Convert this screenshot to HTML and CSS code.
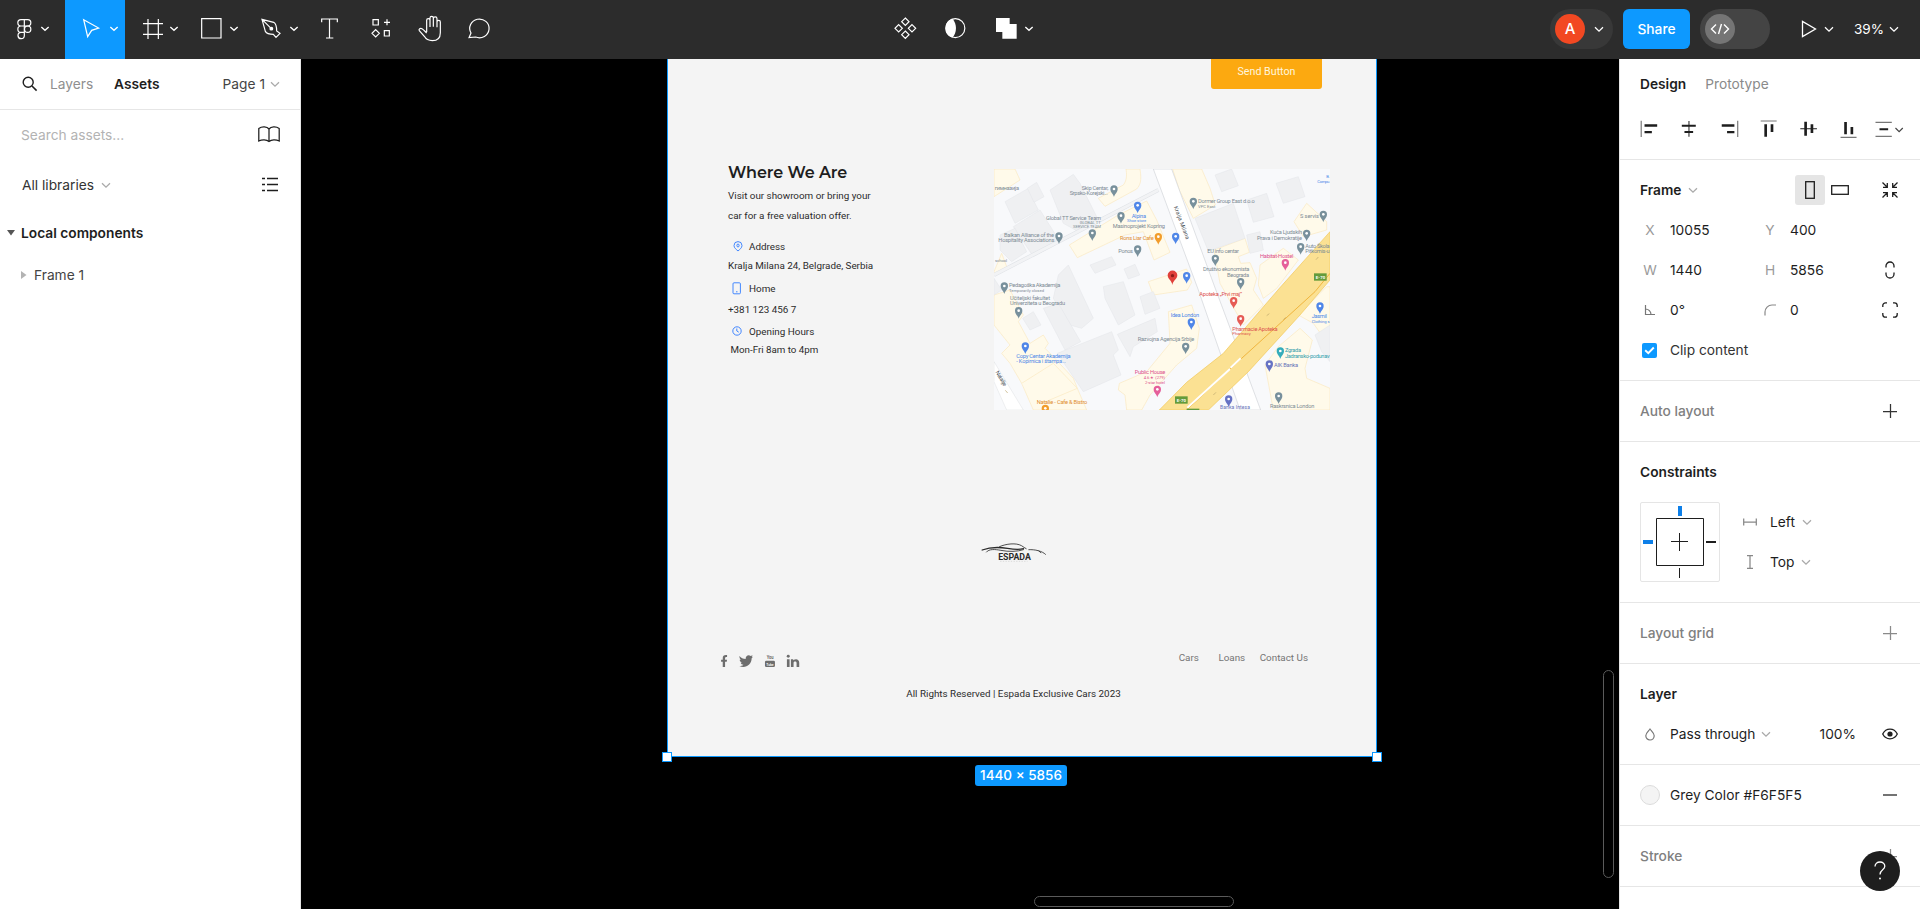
FILE: index.html
```html
<!DOCTYPE html>
<html lang="en">
<head>
<meta charset="utf-8">
<title>Espada – Editor</title>
<link rel="stylesheet" href="styles.css">
</head>
<body>
<svg class="defs" width="0" height="0" aria-hidden="true">
  <symbol id="chev" viewBox="0 0 10 7"><path d="M1 1.2 5 5.2 9 1.2" fill="none" stroke="currentColor" stroke-width="1.25"/></symbol>
  <symbol id="plus" viewBox="0 0 14 14"><path d="M0 7.5H14M7.5 0V14" fill="none" stroke="currentColor" stroke-width="1.25"/></symbol>
</svg>
<div class="app">
  <header class="toolbar">
    <div class="tools">
      <svg class="t65" viewBox="0 0 195 177"><g class="ln"><path d="M73 59h-10a9.500 9.500 0 0 0 0 19h10zM73 59h10a9.500 9.500 0 0 1 0 19h-10M73 78h-10a9.500 9.500 0 0 0 0 19h10zM73 97h-10a9.500 9.500 0 1 0 10 9.500z"/><circle cx="83" cy="87.500" r="9.500"/><path class="ch" d="M124 81l11 10 11-10"/></g></svg>
      <svg class="t60 active" viewBox="195 0 180 177"><g class="ln"><path d="M251 59L296 84 275 91 263 110z"/><path class="ch" d="M331 81l11 10 11-10"/></g></svg>
      <svg class="t60" viewBox="375 0 180 177"><g class="ln"><path d="M429 71h60M429 103h60M444 57v60M475 57v60"/><path class="ch" d="M511 81l11 10 11-10"/></g></svg>
      <svg class="t60" viewBox="555 0 180 177"><g class="ln"><path d="M605 56h58v58h-58z"/><path class="ch" d="M691 81l11 10 11-10"/></g></svg>
      <svg class="t60" viewBox="735 0 180 177"><g class="ln"><path d="M786 58l35 9c7 4 9 15 9 26l10 7-12 12-8-9c-10 0-20-2-24-9zM786 58l25 25"/><circle class="solid" cx="814" cy="86" r="4"/><path class="ch" d="M871 81l11 10 11-10"/></g></svg>
      <svg class="t50" viewBox="915 0 150 177"><path class="ln" d="M965 67V57h47v10M988.500 57v57M978 114h22"/></svg>
      <svg class="t50" viewBox="1065 0 150 177"><path class="ln" d="M1119 59h16v16h-16zM1152 67h18M1161 58v18M1127 89l11 11-11 11-11-11zM1153 92h15v16h-15z"/></svg>
      <svg class="t50" viewBox="1215 0 150 177"><path class="ln" d="M1280 96V61a5 5 0 0 1 10 0V54a5 5 0 0 1 10 0V56a5 5 0 0 1 11 0V66a5 5 0 0 1 10 0V98c0 15-9 24-24 24-11 0-19-4-24-13L1258 92c-3-5 3-9 8-6 5 3 9 8 14 13M1290 60V81M1300 55V80M1311 64V82"/></svg>
      <svg class="t50" viewBox="1365 0 150 177"><path class="ln" d="M1407 113l6-14a29 28 0 1 1 14 12z"/></svg>
    </div>
    <div class="tools mid">
      <svg class="t50" viewBox="60 0 150 177"><path class="ln" d="M136 54l11 11-11 11-11-11zM136 93l11 11-11 11-11-11zM116 74l11 11-11 11-11-11zM156 74l11 11-11 11-11-11z"/></svg>
      <svg class="t50" viewBox="210 0 150 177"><circle class="ln" cx="286" cy="84.500" r="28.500"/><path fill="#fff" d="M277 56a30 30 0 0 0 0 57c14-14 15-42 0-57z"/></svg>
      <svg class="t65" viewBox="360 0 195 177"><path fill="#fff" d="M408 54h41v18h21v44h-43V96h-19z"/><path class="ln ch" d="M496 81l11 10 11-10"/></svg>
    </div>
    <div class="right-tools">
      <div class="user"><span class="avatar">A</span><svg class="chev"><use href="#chev"/></svg></div>
      <button class="share">Share</button>
      <div class="toggle"><span><svg width="20" height="12" viewBox="0 0 20 12"><path d="M6 1.500 1.500 6 6 10.500M14 1.500 18.500 6 14 10.500M11.500 1 8.500 11" fill="none" stroke="#fff" stroke-width="1.400"/></svg></span></div>
      <svg class="play" viewBox="0 0 16 18"><path d="M1.500 1.500V16.500L14.500 9z" fill="none" stroke="#fff" stroke-width="1.300"/></svg><svg class="chev"><use href="#chev"/></svg>
      <span class="pct">39%</span><svg class="chev"><use href="#chev"/></svg>
    </div>
  </header>

  <div class="body">
    <aside class="left">
      <div class="tabs">
        <svg width="16" height="16" viewBox="0 0 16 16"><circle cx="6.200" cy="6.200" r="5" fill="none" stroke="#1e1e1e" stroke-width="1.400"/><path d="M10 10l4.600 4.600" stroke="#1e1e1e" stroke-width="1.600"/></svg>
        <span class="tab-l">Layers</span><b class="tab-a">Assets</b>
        <span class="page">Page 1</span><svg class="chev grey"><use href="#chev"/></svg>
      </div>
      <div class="row search"><span>Search assets...</span>
        <svg width="22" height="17" viewBox="0 0 22 17"><path d="M11 3C9 .5 4 .2 .8 2.500V15C4 13.300 8.500 13.300 11 15.500 13.500 13.300 18 13.300 21.200 15V2.500C18 .2 13 .5 11 3zV15.500" fill="none" stroke="#1e1e1e" stroke-width="1.250"/></svg>
      </div>
      <div class="row libs"><span>All libraries</span><svg class="chev grey"><use href="#chev"/></svg>
        <svg class="end" width="16" height="16" viewBox="0 0 16 16"><path d="M0 1.500h3M5 1.500h11M0 7.500h3M5 7.500h11M0 13.500h3M5 13.500h11" stroke="#1e1e1e" stroke-width="1.300"/></svg>
      </div>
      <div class="row local"><svg width="8" height="6" viewBox="0 0 8 6"><path d="M0 0h8L4 5.500z" fill="#555"/></svg><b>Local components</b></div>
      <div class="row frame1"><svg width="6" height="8" viewBox="0 0 6 8"><path d="M0 0v8L5.500 4z" fill="#b3b3b3"/></svg><span>Frame 1</span></div>
    </aside>

    <main class="canvas">
      <section class="artboard">
        <div class="send">Send Button</div>
        <div class="where">
          <div class="info">
            <h2>Where We Are</h2>
            <p class="intro">Visit our showroom or bring your<br>car for a free valuation offer.</p>
            <div class="item head"><svg width="10" height="11" viewBox="0 0 10 11"><path d="M5 10C3.500 8.600 1 7 1 4.600a4 4 0 0 1 8 0C9 7 6.500 8.600 5 10z"/><ellipse cx="5" cy="4.500" rx="1.100" ry="1.500"/></svg>Address</div>
            <div class="item">Kralja Milana 24, Belgrade, Serbia</div>
            <div class="item head home"><svg width="10" height="13" viewBox="0 0 10 13"><rect x="1" y=".8" width="7.400" height="11" rx="1"/><path d="M4 9.800h1.500"/></svg>Home</div>
            <div class="item">+381 123 456 7</div>
            <div class="item head open"><svg width="10" height="10" viewBox="0 0 10 10"><circle cx="5" cy="5" r="4.200"/><path d="M4.800 2.500V5l2 1.200"/></svg>Opening Hours</div>
            <div class="item hours">Mon-Fri 8am to 4pm</div>
          </div>
          <svg class="map" viewBox="12 12 1008 723">
            <defs>
              <g id="pin"><path d="M0 18C-2 9-11 5-11-6A11 11 0 0 1 11-6C11 5 2 9 0 18z"/><circle cx="0" cy="-6" r="4" fill="#fff"/></g>
            </defs>
            <rect x="12" y="12" width="1008" height="723" fill="#f8f9fb"/>
            <g class="yel">
              <path d="M12 12H75L90 45 12 95z"/><path d="M325 100L400 60C412 45 410 25 408 12H450C456 50 450 60 440 72L345 124z"/>
              <path d="M238 240L385 150 470 108 500 165 540 262 492 285 460 200 405 210 262 278z"/>
              <path d="M548 12H635L660 70 676 120 610 160 568 75z"/><path d="M950 115L1010 170V195L940 215 912 170z"/>
              <path d="M672 255L765 220 778 262 745 275 752 295 780 293 800 340 790 375 820 420 760 480 690 355z"/>
              <path d="M475 350L590 312 605 352 592 375 490 390z"/>
              <path d="M810 300L880 250 925 285 860 370 820 400 805 360z"/>
              <path d="M12 390L60 375 100 450 85 470 120 535 160 510 175 535 165 550 190 575 250 640 262 670 290 735H130L95 655 60 595 35 565 60 540 12 480z"/>
              <path d="M95 655L190 595 262 670 155 715"/>
              <path d="M535 440L605 420 628 490 620 550 560 600 480 690 455 735H410L405 690 385 675 388 655 470 620 540 535z"/>
              <path d="M865 545L930 490 967 525 945 610 950 640 1020 670V735H850L825 600z"/><path d="M925 450L1010 365H1020V480L995 510 970 475z"/><path d="M12 320L35 265 50 305 12 330z"/>
            </g>
            <g class="bld">
              <path d="M45 110L115 70 130 105 145 135 75 175z"/><path d="M112 70L140 52 162 95 132 112z"/><path d="M180 75L250 28 270 55 325 165 265 200 220 175z"/>
              <path d="M70 185L150 135 210 230 130 275z"/><path d="M30 210L75 190 110 260 65 290 30 255z"/><path d="M615 160L730 115 765 220 655 258z"/>
              <path d="M675 30L725 12 745 62 695 80z"/><path d="M770 105L830 85 852 155 790 172z"/><path d="M858 55L925 35 945 95 880 115z"/>
              <path d="M300 300L365 275 378 300 315 325z"/><path d="M402 312L435 298 449 330 415 342z"/><path d="M205 330L235 300 310 460 275 490 240 480 190 400z"/><path d="M12 340L35 375 12 390z"/>
              <path d="M450 395L490 380 510 430 465 448z"/><path d="M340 365L400 350 435 450 385 480 345 400z"/>
              <path d="M160 430L205 415 272 530 225 555z"/><path d="M98 460L130 440 153 480 120 495z"/><path d="M202 565L365 500 385 555 370 570 393 630 280 680z"/><path d="M382 508L495 460 502 500 430 545 420 575z"/>
              <path d="M975 510L1020 480V590L995 560z"/><path d="M770 210L810 200 820 255 780 265z"/>
            </g>
            <path d="M12 330L505 75" stroke="#dfe2e6" stroke-width="12"/><path d="M12 330L505 75" stroke="#f2f3f5" stroke-width="9"/>
            <path d="M490 12L625 375 750 735H812L672 360 545 12z" fill="#fff" stroke="#d0d3d8" stroke-width="2"/>
            <path d="M12 590L100 735H50L12 650z" fill="#fff" stroke="#d0d3d8"/>
            <path d="M1020 200L868 370 700 565 590 652 508 735H655L775 620 930 450 1020 345z" fill="#fbe193" stroke="#f2c758" stroke-width="2"/>
            <path d="M1020 325L975 380 755 580 590 735" fill="none" stroke="#f0b53e" stroke-width="3"/>
            <path d="M752 580L722 608M720 612L592 728" stroke="#fff" stroke-width="6"/>
            <rect x="972" y="325" width="38" height="22" fill="#649b3b"/><rect x="555" y="694" width="38" height="22" fill="#649b3b"/><rect x="590" y="731" width="38" height="4" fill="#649b3b"/>
            <g class="white"><text x="977" y="341" textLength="29">E-70</text><text x="560" y="710" textLength="28">E-70</text></g>
            <g class="lbl">
              <text x="14" y="74" textLength="73">гимназија</text><text x="275" y="74" textLength="80">Skip Centar,</text><text x="239" y="91" textLength="115">Srpsko-Korejski...</text>
              <text x="168" y="164" textLength="165">Global TT Service Team</text><text class="sm" x="269" y="177" textLength="63">GLOBAL TT</text><text class="sm" x="249" y="189" textLength="84">SERVICE TEAM</text>
              <text x="42" y="215" textLength="150">Balkan Alliance of the</text><text x="25" y="232" textLength="168">Hospitality Associations</text><text x="368" y="190" textLength="157">Masinoprojekt Kopring</text>
              <text x="385" y="263" textLength="44">Ponos</text><text x="624" y="114" textLength="170">Dormer Group East d.o.o</text><text class="sm" x="624" y="128" textLength="52">VPC East</text>
              <text x="930" y="159" textLength="57">S servis</text><text x="840" y="208" textLength="96">Kuća Ljudskih</text><text x="801" y="224" textLength="135">Prava i Demokratije</text>
              <text x="946" y="248" textLength="73">Auto Škola</text><text x="946" y="264" textLength="73">Pitkomis-u</text><text x="652" y="265" textLength="95">EU info centar</text>
              <text x="639" y="319" textLength="139">Društvo ekonomista</text><text x="711" y="335" textLength="66">Beograda</text><text class="sm" x="15" y="290" textLength="36">school</text>
              <text x="57" y="367" textLength="154">Pedagoška Akademija</text><text class="sm" x="57" y="382" textLength="105">Temporarily closed</text><text x="60" y="404" textLength="120">Učiteljski fakultet</text><text x="60" y="421" textLength="165">Univerziteta u Beogradu</text>
              <text x="443" y="528" textLength="170">Razvojna Agencija Srbije</text><text x="840" y="730" textLength="133">Raskrsnica London</text>
            </g>
            <g class="lbl blue"><text x="425" y="158" textLength="43">Alpina</text><text class="sm" x="411" y="171" textLength="58">Shoe store</text><text x="542" y="455" textLength="85">Idea London</text><text x="79" y="579" textLength="163">Copy Centar Akademija</text><text x="79" y="595" textLength="149">- Kopirnica i štampa...</text><text x="965" y="460" textLength="46">Jasmil</text><text class="sm" x="965" y="475" textLength="54">Clothing s</text><text class="sm" x="982" y="53" textLength="38">Compu.</text><text class="sm" x="1009" y="40">B.</text></g>
            <g class="lbl org"><text x="390" y="226" textLength="101">Rons Liar Cafe</text><text x="140" y="717" textLength="152">Natalie - Cafe &amp; Bistro</text></g>
            <g class="lbl pink"><text x="810" y="278" textLength="100">Habitat-Hostel</text><text x="434" y="626" textLength="92">Public House</text><text class="sm" x="461" y="642" textLength="64">4.6 ★ (279)</text><text class="sm" x="465" y="657" textLength="60">2-star hotel</text></g>
            <g class="lbl red"><text x="628" y="393" textLength="128">Apoteka „Prvi maj”</text><text x="727" y="498" textLength="136">Pharmacie Apoteka</text><text class="sm" x="727" y="511" textLength="55">Pharmacy</text></g>
            <g class="lbl teal"><text x="885" y="562" textLength="48">Zgrada</text><text x="885" y="578" textLength="134">Jadransko-podunav</text></g>
            <g class="lbl ind"><text x="852" y="607" textLength="72">AIK Banka</text><text class="cut" x="690" y="731" textLength="90">Banka Intesa</text></g>
            <text class="street" transform="translate(551 126) rotate(69)" textLength="105">Kralja Milana</text><text class="street" transform="translate(16 622) rotate(59)" textLength="50">Natalije</text>
            <g fill="#78909c">
              <use href="#pin" x="372" y="78"/><use href="#pin" x="393" y="158"/><use href="#pin" x="307" y="210"/><use href="#pin" x="207" y="219"/><use href="#pin" x="443" y="258"/><use href="#pin" x="610" y="115"/><use href="#pin" x="1000" y="154"/><use href="#pin" x="950" y="211"/><use href="#pin" x="932" y="251"/><use href="#pin" x="676" y="286"/><use href="#pin" x="752" y="356"/><use href="#pin" x="43" y="369"/><use href="#pin" x="86" y="443"/><use href="#pin" x="587" y="550"/><use href="#pin" x="866" y="699"/>
            </g>
            <g fill="#4f86e8"><use href="#pin" x="443" y="127"/><use href="#pin" x="557" y="220"/><use href="#pin" x="590" y="338"/><use href="#pin" x="604" y="477"/><use href="#pin" x="106" y="549"/><use href="#pin" x="990" y="429"/></g>
            <g fill="#f29c2b"><use href="#pin" x="505" y="221"/><use href="#pin" x="166" y="736"/></g>
            <g fill="#e55f9a"><use href="#pin" x="886" y="299"/><use href="#pin" x="502" y="679"/></g>
            <g fill="#e65b55"><use href="#pin" x="731" y="413"/><use href="#pin" x="752" y="467"/></g>
            <g fill="#35adbb"><use href="#pin" x="871" y="564"/></g><g fill="#6672c4"><use href="#pin" x="838" y="603"/><use href="#pin" x="716" y="708"/></g>
            <path d="M547 360C545 346 533 343 533 331A14.500 14.500 0 0 1 562 331C562 343 549 346 547 360z" fill="#e0403a"/><circle cx="547.500" cy="332" r="5" fill="#8f1d18"/>
            <path d="M978 284l7-8M830 452l8-6M880 464l7-7M670 690l8-8M46 676l7 8" stroke="#b9a56a" stroke-width="2"/>
          </svg>
        </div>
        <svg class="logo" viewBox="0 0 200 60"><g fill="none" stroke="#2b2b2b" stroke-linecap="round"><path d="M6 21C30 12 62 13 82 16 100 19 118 20 130 17" stroke-width="4"/><path d="M19 27C26 17 46 19 62 22 86 27 112 26 130 20" stroke-width="2.500"/><path d="M58 11C78 2 108-1 124 8 130 12 134 15 138 17" stroke-width="2.500"/><path d="M146 20C164 19 186 24 196 34M176 24L182 29" stroke-width="2.500"/></g><text x="54" y="50" textLength="98" lengthAdjust="spacingAndGlyphs">ESPADA</text><path d="M60 55h82" stroke="#cfcfcf" stroke-width="2" stroke-dasharray="4 4"/></svg>
        <div class="foot">
          <svg class="social" viewBox="60 372 244 46"><g fill="#6d6d6d"><path d="M68 414V398h-5v-6h5v-5c0-7 4-10 13-9v6c-5 0-6 1-6 4v4h6l-1 6h-5v16z"/><path d="M118 381c5 6 11 9 19 9-1-9 8-15 15-9l6-2-3 5 4-1-4 5c0 20-20 32-37 23 5 0 9-1 12-4-4 0-7-2-8-6h4c-4-2-7-5-7-9l4 1c-4-3-5-8-5-12z"/><rect x="195" y="395" width="30" height="19" rx="4"/><path d="M261 391h8v23h-8zM273 391h7v3c8-7 18-3 18 7v13h-8v-12c0-6-9-6-9 0v12h-8z"/><circle cx="265" cy="382" r="4.500"/></g><text class="you" x="200" y="391" textLength="21" lengthAdjust="spacingAndGlyphs">You</text><text class="tube" x="199" y="410" textLength="22" lengthAdjust="spacingAndGlyphs">Tube</text></svg>
          <nav><span>Cars</span><span>Loans</span><span>Contact Us</span></nav>
        </div>
        <div class="copy">All Rights Reserved | Espada Exclusive Cars 2023</div>
        <i class="handle hl"></i><i class="handle hr"></i>
      </section>
      <div class="size">1440 × 5856</div>
      <i class="vbar"></i><i class="hbar"></i>
    </main>

    <aside class="inspector">
      <div class="sec s1">
        <div class="itabs"><b>Design</b><span>Prototype</span></div>
        <svg class="align" viewBox="80 170 810 70"><g stroke="#777" stroke-width="3.500"><path d="M95 181v49M385 181v49M454 182h48M694 231h48M799 186h49M799 228h49"/></g><path fill="#1e1e1e" d="M105 192h38v7h-38zM105 212h22v7h-22zM217 193h42v6h-42zM225 212h26v6h-26zM237 182h3v47h-3zM337 192h38v7h-38zM353 212h22v7h-22zM465 192h8v37h-8zM484 192h8v23h-8zM585 184h8v42h-8zM604 192h8v26h-8zM573 204h50v3h-50zM705 185h8v37h-8zM724 200h8v22h-8zM811 204h26v6h-26z"/><path d="M859 203l11 11 11-11" fill="none" stroke="#444" stroke-width="3.500"/></svg>
      </div>
      <div class="sec s2">
        <div class="irow"><b>Frame</b><svg class="chev grey"><use href="#chev"/></svg><span class="orient"><svg width="10" height="18"><rect x=".7" y=".7" width="8.600" height="16.600" fill="none" stroke="#1e1e1e" stroke-width="1.300"/></svg></span><svg class="land" width="18" height="10"><rect x=".7" y=".7" width="16.600" height="8.600" fill="none" stroke="#1e1e1e" stroke-width="1.300"/></svg><svg class="fit" width="16" height="16" viewBox="0 0 16 16"><path d="M.5.5 5 5M1 5.300H5.300V1M15.500.5 11 5M15 5.300H10.700V1M.5 15.500 5 11M1 10.700H5.300V15M15.500 15.500 11 11M15 10.700H10.700V15" fill="none" stroke="#1e1e1e" stroke-width="1.300"/></svg></div>
        <div class="irow grid"><label>X</label><span>10055</span><label>Y</label><span>400</span></div>
        <div class="irow grid"><label>W</label><span>1440</span><label>H</label><span>5856</span><svg width="10" height="18" viewBox="0 0 10 18"><path d="M1 6.500V5a4 4 0 0 1 8 0v1.500M1 11.500V13a4 4 0 0 0 8 0v-1.500" fill="none" stroke="#1e1e1e" stroke-width="1.300"/></svg></div>
        <div class="irow grid"><label><svg width="12" height="12" viewBox="0 0 12 12"><path d="M1.500 1v9.500H11M1.500 5a5.500 5.500 0 0 1 5.500 5.500" fill="none" stroke="#777" stroke-width="1.200"/></svg></label><span>0°</span><label><svg width="12" height="12" viewBox="0 0 12 12"><path d="M1 11.500V8A7 7 0 0 1 8 1h4" fill="none" stroke="#888" stroke-width="1.200"/></svg></label><span>0</span><svg width="16" height="16" viewBox="0 0 16 16"><path d="M.8 5V3.500A2.700 2.700 0 0 1 3.500.8H5M11 .8h1.500a2.700 2.700 0 0 1 2.700 2.700V5M15.200 11v1.500a2.700 2.700 0 0 1-2.700 2.700H11M5 15.200H3.500A2.700 2.700 0 0 1 .8 12.500V11" fill="none" stroke="#1e1e1e" stroke-width="1.300"/></svg></div>
        <div class="irow clip"><span class="check"><svg width="11" height="9" viewBox="0 0 11 9"><path d="M1.200 4.200 4.300 7.200 9.800 1.500" fill="none" stroke="#fff" stroke-width="1.900"/></svg></span>Clip content</div>
      </div>
      <div class="sec one muted"><b>Auto layout</b><svg class="plus dark"><use href="#plus"/></svg></div>
      <div class="sec s4">
        <b>Constraints</b>
        <div class="cons">
          <div class="cbox"><svg width="78" height="78" viewBox="93 399 234 234"><path d="M139.500 445.500h141v141h-141zM183 514.500h51M208.500 489v54" fill="none" stroke="#1e1e1e" stroke-width="3"/><path fill="#0d7fe8" d="M204 408h12v30h-12zM99 510h30v12H99z"/><path fill="#1e1e1e" d="M288 513h30v6h-30zM207 594h3v30h-3z"/></svg></div>
          <div class="csel"><div><svg width="14" height="8"><path d="M.7.500v7M13.300.500v7M1 4h12" stroke="#888" stroke-width="1.250"/></svg><span>Left</span><svg class="chev grey"><use href="#chev"/></svg></div><div><svg width="14" height="14"><path d="M4 .7h6M4 13.300h6M7 1v12" stroke="#888" stroke-width="1.250"/></svg><span>Top</span><svg class="chev grey"><use href="#chev"/></svg></div></div>
        </div>
      </div>
      <div class="sec one muted"><b>Layout grid</b><svg class="plus"><use href="#plus"/></svg></div>
      <div class="sec s6"><b>Layer</b><div class="pass"><svg width="10" height="13" viewBox="0 0 10 13"><path d="M5 1C3.500 3 .8 5 .8 7.800a4.200 4.200 0 0 0 8.400 0C9.200 5 6.500 3 5 1z" fill="none" stroke="#777" stroke-width="1.200"/></svg><span>Pass through</span><svg class="chev grey"><use href="#chev"/></svg><span class="op">100%</span><svg class="eye" width="16" height="12" viewBox="0 0 16 12"><path d="M.7 6C4-.4 12-.4 15.300 6 12 12.400 4 12.400.7 6z" fill="none" stroke="#1e1e1e" stroke-width="1.300"/><circle cx="8" cy="6" r="2.600" fill="#1e1e1e"/></svg></div></div>
      <div class="sec one fill"><i class="swatch"></i><span>Grey Color #F6F5F5</span><svg class="minus" width="14" height="2"><path d="M0 1h14" stroke="#444" stroke-width="1.500"/></svg></div>
      <div class="sec one muted"><b>Stroke</b><svg class="plus"><use href="#plus"/></svg></div>
    </aside>
  </div>
  <div class="help"><svg width="12" height="20" viewBox="0 0 12 20"><path d="M1 5.500C1 2.500 3.200 1 6 1s4.800 1.700 4.800 4.300C10.800 9 6 8.500 6 13.500" fill="none" stroke="#fff" stroke-width="1.300"/><circle cx="6" cy="17.500" r="1" fill="#fff"/></svg></div>
</div>
</body>
</html>
```
FILE: styles.css
```css
* { box-sizing: border-box; }
body { margin: 0; font: 13.75px/20px Inter, "Liberation Sans", sans-serif; color: #1e1e1e; background: #000; overflow: hidden; }
b { font-weight: 600; }
svg { display: block; flex: none; }
.defs { position: absolute; }
.app { position: relative; width: 1920px; height: 909px; display: flex; flex-direction: column; }
.chev { width: 10px; height: 7px; }
.chev.grey { color: #aaa; }

/* Toolbar */
.toolbar { height: 59px; flex: none; background: #2c2c2c; display: flex; color: #fff; }
.tools { display: flex; }
.tools svg { height: 59px; }
.mid { margin-left: 375px; }
.t65 { width: 65px; }
.t60 { width: 60px; }
.t50 { width: 50px; }
.active { background: #0d99ff; }
.ln { fill: none; stroke: #fff; stroke-width: 3.6; }
.ch { stroke-width: 4; }
.solid { fill: #fff; }
.right-tools { margin-left: auto; display: flex; align-items: center; padding: 0 21px 1px 0; }
.user { width: 63px; height: 40px; border-radius: 20px; background: #383838; display: flex; align-items: center; padding-left: 5px; gap: 9px; }
.avatar { width: 30px; height: 30px; border-radius: 50%; background: #f24822; text-align: center; line-height: 30px; font-size: 15px; font-weight: 500; }
.share { width: 67px; height: 40px; margin: 0 10px; padding: 0; border: 0; border-radius: 6px; background: #0d99ff; color: #fff; font: 500 13.75px Inter, sans-serif; }
.toggle { width: 70px; height: 40px; border-radius: 20px; background: #444; padding: 5px; margin-right: 31px; }
.toggle span { width: 30px; height: 30px; border-radius: 50%; background: #757575; display: grid; place-items: center; }
.play { width: 16px; height: 18px; margin-right: 7px; }
.pct { width: 29px; margin: 0 6px 0 20px; font-size: 13.5px; white-space: nowrap; }

.body { flex: 1; display: flex; min-height: 0; }

/* Assets panel */
.left { width: 301px; flex: none; background: #fff; border-right: 1px solid #e6e6e6; }
.tabs { height: 51px; border-bottom: 1px solid #e6e6e6; display: flex; align-items: center; padding: 0 20px 0 22px; }
.tab-l { color: #8f8f8f; margin-left: 12px; width: 64px; }
.page { margin-left: auto; margin-right: 5px; color: #444; }
.row { display: flex; align-items: center; height: 50px; padding-left: 22px; color: #333; }
.search { color: #b3b3b3; justify-content: space-between; padding: 0 20px 1px 21px; }
.libs .chev { margin-left: 7px; }
.libs .end { margin-left: auto; margin-right: 22px; }
.local { height: 46px; padding-left: 7px; color: #1e1e1e; gap: 6px; }
.frame1 { height: 38px; padding-left: 21px; gap: 7px; color: #444; }

/* Canvas */
.canvas { position: relative; flex: 1; background: #000; display: flex; flex-direction: column; padding-left: 366px; }
.artboard { position: relative; width: 710px; height: 698px; background: #f4f4f4; border: solid #0d99ff; border-width: 0 1.5px 1.5px 1px; font: 9.85px/19.7px Roboto, sans-serif; color: #2b2b2b; }
.send { width: 111px; height: 30px; margin-left: 543px; background: #fca910; border-radius: 0 0 3px 3px; color: #fff6de; text-align: center; line-height: 25px; font-size: 10.7px; }
.where { display: flex; justify-content: space-between; padding: 80px 46px 0 60px; }
.map { width: 336px; height: 241px; }
.info { height: 241px; white-space: nowrap; }
.info h2 { margin: -6px 0 0; font: 600 16px/20px Montserrat, Inter, sans-serif; letter-spacing: -.1px; color: #1e1e1e; }
.intro { margin: 3px 0 12px; }
.item { height: 19px; line-height: 19px; }
.head { display: flex; align-items: center; gap: 6px; padding-left: 5px; }
.head svg { fill: none; stroke: #2f7bff; stroke-width: .9; }
.home { height: 27px; padding-left: 4px; gap: 7px; }
.home + .item { height: 16px; line-height: 16px; }
.open { height: 26px; padding-left: 4px; gap: 7px; }
.hours { height: 12px; line-height: 11px; padding-left: 2.5px; font-size: 9.75px; }
.logo { width: 67px; height: 20px; margin: 133px 0 0 312px; }
.logo text { font: 700 25px Roboto, sans-serif; fill: #2b2b2b; }
.foot { display: flex; justify-content: space-between; align-items: flex-start; padding: 90px 68px 0 52px; }
.social { width: 81.3px; height: 15.3px; }
.you { font: 700 17px Roboto, sans-serif; fill: #6d6d6d; }
.tube { font: 700 13px Roboto, sans-serif; fill: #f4f4f4; }
.foot nav { display: flex; color: #757575; margin-top: -5px; }
.foot nav span + span { margin-left: 19.5px; }
.foot nav span:last-child { margin-left: 14.5px; }
.copy { text-align: center; margin-top: 16px; padding-right: 17px; }
.handle { position: absolute; bottom: -6px; width: 10px; height: 10px; background: #fff; border: 1.5px solid #0d99ff; }
.hl { left: -6px; }
.hr { right: -6px; }
.size { width: 92px; height: 21px; margin: 8px 0 0 308px; border-radius: 3px; background: #0d99ff; color: #fff; text-align: center; line-height: 21px; font-size: 13.5px; font-weight: 500; white-space: nowrap; }
.vbar, .hbar { position: absolute; border: 1px solid #5a5a5a; border-radius: 6px; }
.vbar { width: 11px; height: 208px; right: 5px; bottom: 31px; }
.hbar { width: 200px; height: 11px; left: 733px; bottom: 2px; }

/* Map */
.yel path { fill: #fffaea; stroke: #fae9bf; stroke-width: 2; }
.bld path { fill: #eff0f2; stroke: #e3e5e8; stroke-width: 1.5; }
.map text { font: 17px Roboto, sans-serif; }
.lbl { fill: #7d8b94; }
.map .sm { font-size: 12.5px; }
.map .cut { font-size: 15px; }
.blue { fill: #4b87e8; }
.org { fill: #e08c2e; }
.pink { fill: #dd4f8c; }
.red { fill: #dc514d; }
.teal { fill: #34a0ac; }
.ind { fill: #6672b8; }
.map .white text { font-size: 13px; font-weight: 700; fill: #fff; }
.map .street { font-size: 17px; fill: #4a4f55; }

/* Inspector */
.inspector { width: 301px; flex: none; background: #fff; border-left: 1px solid #e6e6e6; }
.sec { border-bottom: 1px solid #e6e6e6; padding-left: 20px; }
.s1 { height: 101px; }
.itabs { display: flex; gap: 19px; height: 50px; align-items: center; }
.itabs span { color: #8a8a8a; }
.align { width: 270px; height: 23.3px; margin: 8px 0 0 -4px; }
.s2 { height: 221px; padding-top: 10px; }
.irow { height: 40px; display: flex; align-items: center; }
.irow > .chev { margin-left: 6px; }
.orient { width: 30px; height: 30px; margin-left: auto; border-radius: 3px; background: #e5e5e5; display: grid; place-items: center; }
.land { margin: 0 33px 0 6px; }
.fit { margin-right: 22px; }
.irow.grid { display: grid; grid-template-columns: 30px 90px 30px 88px 24px; justify-items: start; }
.grid label { color: #9a9a9a; width: 20px; display: flex; justify-content: center; }
.grid > svg { justify-self: center; }
.check { width: 15px; height: 15px; margin: 0 13px 0 2px; border-radius: 2px; background: #0d99ff; display: grid; place-items: center; }
.clip { color: #333; }
.one { height: 61px; display: flex; align-items: center; justify-content: space-between; padding-right: 23px; }
.muted { color: #808080; }
.muted b { font-weight: 500; }
.plus { width: 14px; height: 14px; color: #8a8a8a; }
.plus.dark { color: #333; }
.s4 { height: 161px; padding-top: 20px; }
.cons { display: flex; margin-top: 20px; }
.cbox { width: 80px; height: 80px; border: 1px solid #e5e5e5; border-radius: 2px; }
.csel { margin-left: 23px; }
.csel div { height: 40px; display: flex; align-items: center; }
.csel span { margin: 0 7px 0 13px; }
.s6 { height: 101px; padding-top: 20px; }
.pass { height: 40px; display: flex; align-items: center; padding-left: 5px; margin-top: 10px; }
.pass span { margin-left: 15px; margin-right: 6px; }
.pass .op { margin-left: auto; margin-right: 26px; }
.eye { margin-right: 22px; }
.fill { justify-content: flex-start; }
.swatch { width: 20px; height: 20px; margin-right: 10px; border-radius: 50%; background: #f4f4f4; border: 1px solid #dcdcdc; }
.minus { margin-left: auto; }
.help { position: absolute; left: 1860px; top: 851px; width: 40px; height: 40px; border-radius: 50%; background: #1e1e1e; display: grid; place-items: center; }
```
